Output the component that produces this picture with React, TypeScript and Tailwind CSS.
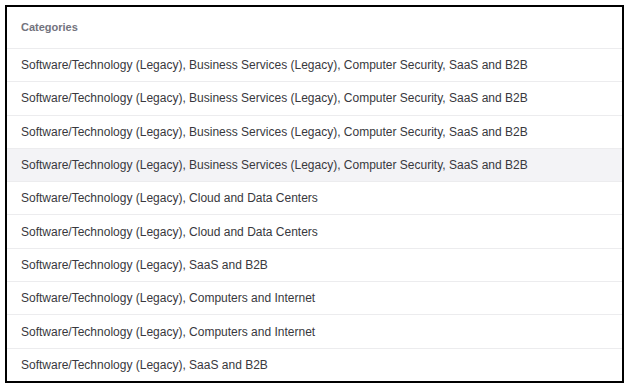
const rows = [
  "Software/Technology (Legacy), Business Services (Legacy), Computer Security, SaaS and B2B",
  "Software/Technology (Legacy), Business Services (Legacy), Computer Security, SaaS and B2B",
  "Software/Technology (Legacy), Business Services (Legacy), Computer Security, SaaS and B2B",
  "Software/Technology (Legacy), Business Services (Legacy), Computer Security, SaaS and B2B",
  "Software/Technology (Legacy), Cloud and Data Centers",
  "Software/Technology (Legacy), Cloud and Data Centers",
  "Software/Technology (Legacy), SaaS and B2B",
  "Software/Technology (Legacy), Computers and Internet",
  "Software/Technology (Legacy), Computers and Internet",
  "Software/Technology (Legacy), SaaS and B2B",
]

export default function App() {
  return (
    <div className="h-[391px] w-[629px] bg-white p-[5px] font-['Liberation_Sans',sans-serif]">
      <div className="flex h-[378px] w-[619px] flex-col border-2 border-black">
        <div className="flex h-[42px] shrink-0 items-center border-b border-[#ececee] px-[14px]">
          <span className="text-[11px] font-bold text-[#73737d]">Categories</span>
        </div>
        {rows.map((row, i) => (
          <div
            key={i}
            className={
              "flex h-[33.3px] shrink-0 items-center px-[14px] text-[12px] text-[#38383d] " +
              (i < rows.length - 1 ? "border-b border-[#ececee] " : "") +
              (i === 3 ? "bg-[#f3f3f6]" : "")
            }
          >
            {row}
          </div>
        ))}
      </div>
    </div>
  )
}
